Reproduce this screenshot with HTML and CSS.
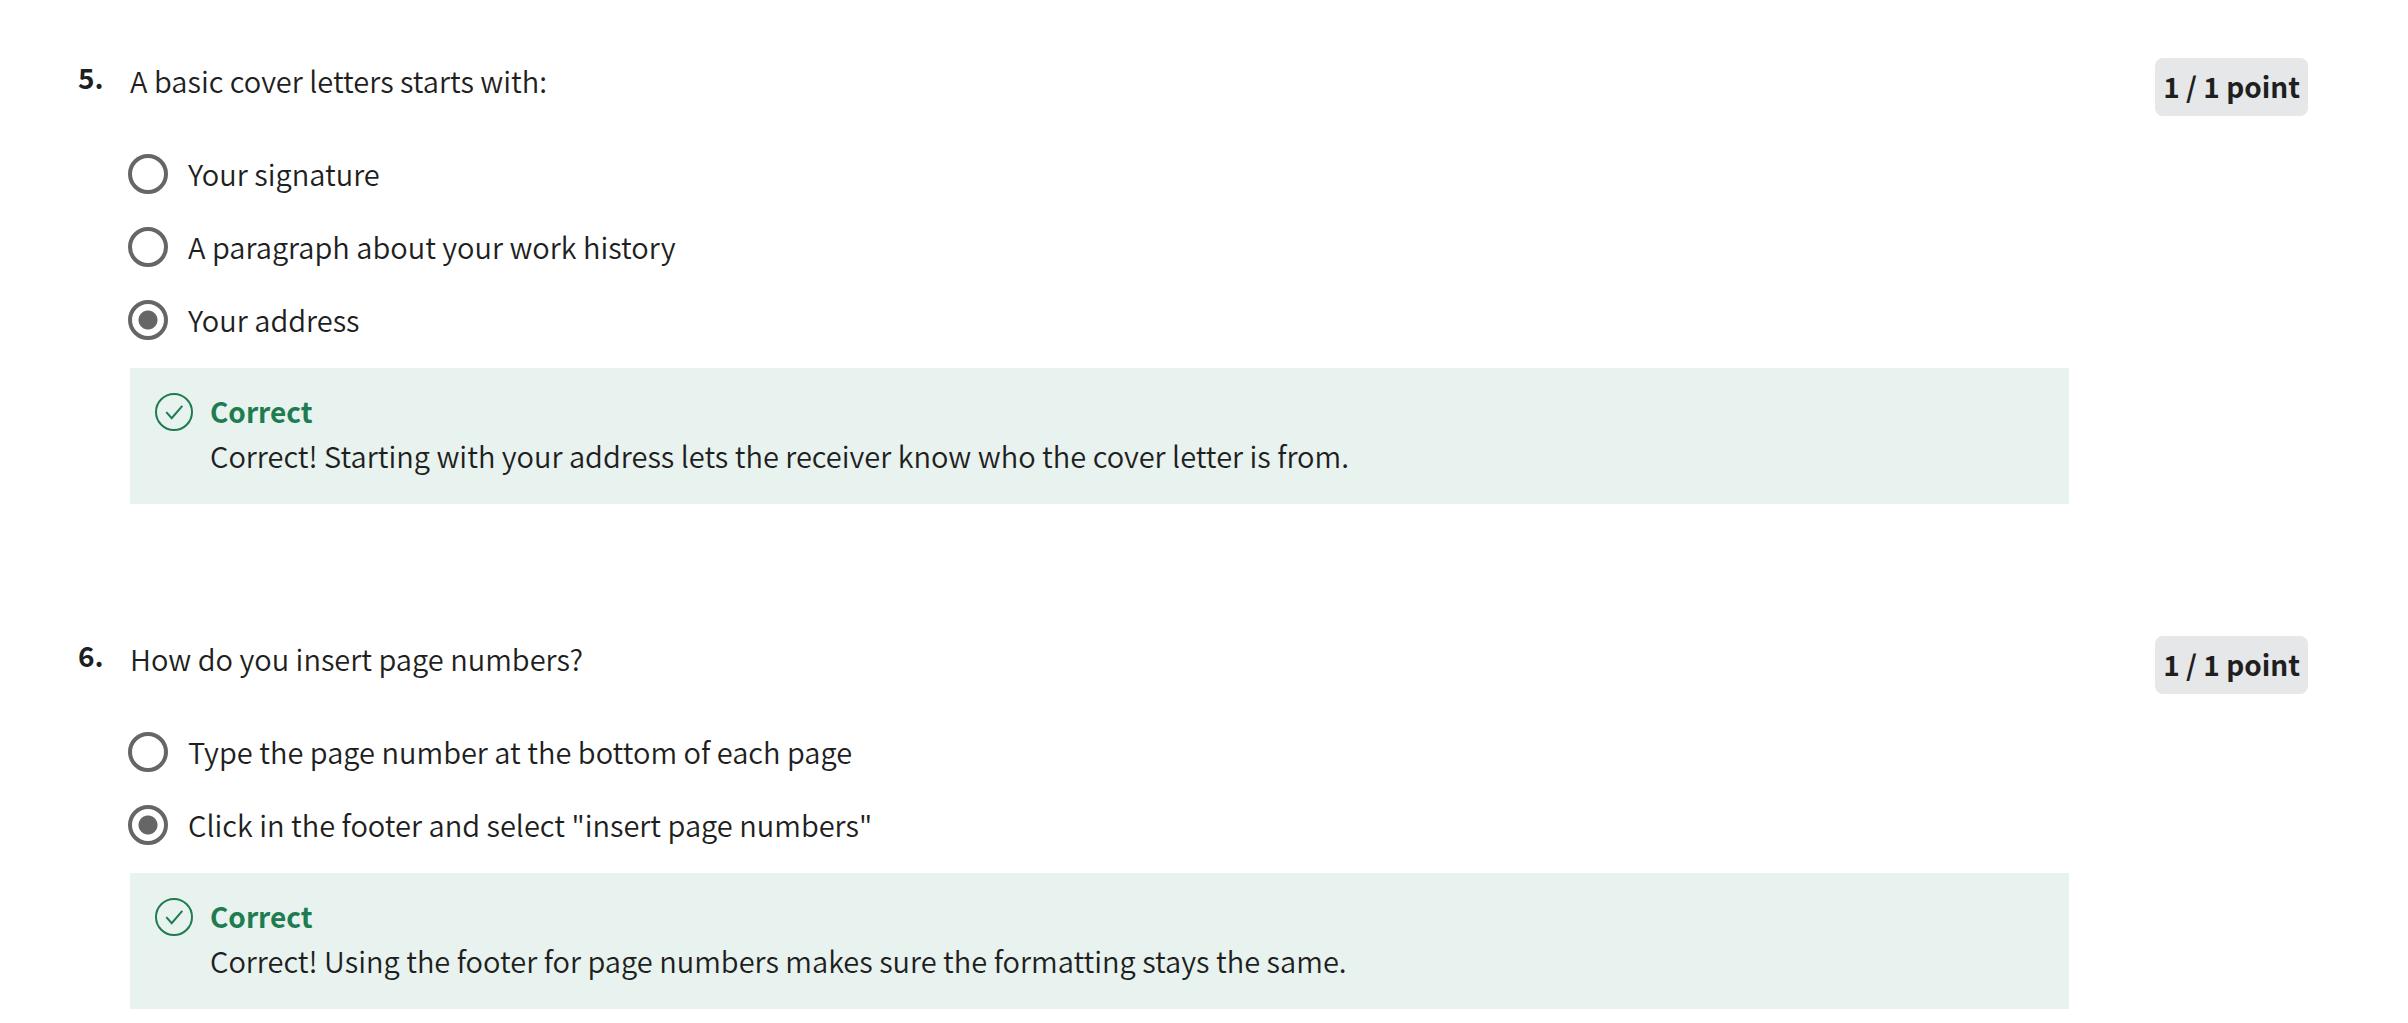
FILE: index.html
```html
<!DOCTYPE html>
<html lang="en">
<head>
<meta charset="utf-8">
<title>Quiz results</title>
<link rel="stylesheet" href="styles.css">
</head>
<body>
<main class="quiz">
  <section class="question">
    <h2 class="number">5.</h2>
    <div class="body">
      <fieldset class="choices">
        <legend class="prompt">A basic cover letters starts with:</legend>
        <label class="choice"><input type="radio" name="q5"><span>Your signature</span></label>
        <label class="choice"><input type="radio" name="q5"><span>A paragraph about your work history</span></label>
        <label class="choice"><input type="radio" name="q5" checked><span>Your address</span></label>
      </fieldset>
      <div class="feedback">
        <svg class="check" viewBox="0 0 40 40" aria-hidden="true"><circle cx="20" cy="20" r="18"/><path d="M12.3 20.2l5.4 6 10.6-12.4"/></svg>
        <div>
          <h3 class="verdict">Correct</h3>
          <p class="reason">Correct! Starting with your address lets the receiver know who the cover letter is from.</p>
        </div>
      </div>
    </div>
    <div class="score">1 / 1 point</div>
  </section>
  <section class="question">
    <h2 class="number">6.</h2>
    <div class="body">
      <fieldset class="choices">
        <legend class="prompt">How do you insert page numbers?</legend>
        <label class="choice"><input type="radio" name="q6"><span>Type the page number at the bottom of each page</span></label>
        <label class="choice"><input type="radio" name="q6" checked><span>Click in the footer and select "insert page numbers"</span></label>
      </fieldset>
      <div class="feedback">
        <svg class="check" viewBox="0 0 40 40" aria-hidden="true"><circle cx="20" cy="20" r="18"/><path d="M12.3 20.2l5.4 6 10.6-12.4"/></svg>
        <div>
          <h3 class="verdict">Correct</h3>
          <p class="reason">Correct! Using the footer for page numbers makes sure the formatting stays the same.</p>
        </div>
      </div>
    </div>
    <div class="score">1 / 1 point</div>
  </section>
</main>
</body>
</html>
```
FILE: styles.css
```css
* {
  box-sizing: border-box;
}

body {
  margin: 0;
  background: #fff;
  color: #1f1f1f;
  font-family: "Noto Sans CJK SC", "Open Sans", sans-serif;
  font-size: 29px;
  font-weight: 350;
  line-height: 44px;
}

.quiz {
  display: flex;
  flex-direction: column;
  gap: 132px;
  padding: 58px 100px 14px 78px;
}

.question {
  display: flex;
  align-items: flex-start;
}

.number,
.verdict,
.score {
  margin: 0;
  font-size: 28px;
  font-weight: 700;
}

.number {
  flex: none;
  width: 52px;
  line-height: 38px;
}

.body {
  flex: 1;
  margin-right: 86px;
}

.choices {
  margin: 0;
  padding: 0;
  border: 0;
}

.prompt {
  padding: 0;
  margin-bottom: 35px;
}

.choice {
  display: flex;
  align-items: center;
  gap: 20px;
  height: 73px;
}

.choice span {
  padding-bottom: 2px;
}

.choice input {
  appearance: none;
  width: 40px;
  height: 40px;
  margin: 0 0 0 -2px;
  border: 4px solid #666;
  border-radius: 50%;
}

.choice input:checked {
  background: radial-gradient(circle, #666 9px, transparent 10px);
}

.feedback {
  display: flex;
  gap: 16px;
  margin-top: 12px;
  padding: 21px 24px 27px;
  background: #e8f2ee;
}

.check {
  flex: none;
  width: 40px;
  height: 40px;
  margin-top: 3px;
  fill: none;
  stroke: #1d7c50;
  stroke-width: 2;
}

.verdict {
  color: #1d7c50;
}

.reason {
  margin: 0;
}

.score {
  flex: none;
  padding: 6px 8px 8px;
  border-radius: 8px;
  background: #e5e7e8;
}
```
